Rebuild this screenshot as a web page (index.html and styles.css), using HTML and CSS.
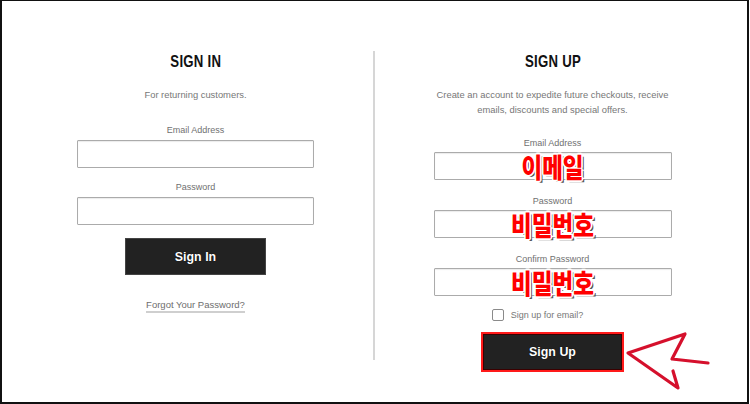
FILE: index.html
```html
<!DOCTYPE html>
<html lang="en">
<head>
<meta charset="utf-8">
<title>Sign in / Sign up</title>
<link rel="stylesheet" href="styles.css">
</head>
<body>
<div class="frame">
  <div class="panes">
    <section class="col">
      <h2 class="title"><span class="title-text">SIGN IN</span></h2>
      <p class="sub">For returning customers.</p>
      <label class="lbl lbl-first">Email Address</label>
      <div class="field"><input class="box" type="text"></div>
      <label class="lbl">Password</label>
      <div class="field"><input class="box" type="password"></div>
      <button class="btn btn-in">Sign In</button>
      <a class="forgot" href="#">Forgot Your Password?</a>
    </section>
    <div class="divider"></div>
    <section class="col col-up">
      <h2 class="title"><span class="title-text">SIGN UP</span></h2>
      <p class="sub">Create an account to expedite future checkouts, receive<br>emails, discounts and special offers.</p>
      <label class="lbl lbl-first">Email Address</label>
      <div class="field"><input class="box" type="text"><span class="mark">이메일</span></div>
      <label class="lbl">Password</label>
      <div class="field"><input class="box" type="password"><span class="mark">비밀번호</span></div>
      <label class="lbl">Confirm Password</label>
      <div class="field"><input class="box" type="password"><span class="mark">비밀번호</span></div>
      <div class="check-row"><span class="check"></span><span class="check-text">Sign up for email?</span></div>
      <button class="btn btn-up">Sign Up</button>
    </section>
  </div>
  <svg class="arrow" viewBox="0 0 750 404" width="750" height="404">
    <polyline points="673,371 678,388 628,353 685,334 672,359 708,363" fill="none" stroke="#d5102c" stroke-width="3.2" stroke-linecap="round" stroke-linejoin="round"/>
  </svg>
</div>
</body>
</html>
```

FILE: styles.css
```css
* { box-sizing: border-box; }
html, body { margin: 0; padding: 0; background: #fff; }
body { font-family: "Liberation Sans", Arial, sans-serif; }

.frame {
  position: relative;
  width: 749px;
  height: 404px;
  border: 2px solid #111;
  border-top-width: 1px;
  background: #fff;
  overflow: hidden;
}

.panes {
  display: grid;
  grid-template-columns: 355px 2px 355px;
  align-items: start;
  margin-top: 50px;
  padding-left: 16px;
}

.divider {
  width: 2px;
  height: 309px;
  background: #d6d6d6;
}

.col {
  display: flex;
  flex-direction: column;
  align-items: center;
}

.title {
  margin: 0;
  font-family: "Liberation Sans", Arial, sans-serif;
  font-weight: 700;
  font-size: 16.5px;
  line-height: 20px;
  color: #111;
}
.title-text {
  display: inline-block;
  transform: scaleX(0.8);
  letter-spacing: 0.3px;
}

.sub {
  margin: 16px 0 0;
  font-size: 9.4px;
  line-height: 15px;
  color: #777;
  text-align: center;
}

.lbl {
  display: block;
  margin-top: 13px;
  font-size: 9px;
  line-height: 12px;
  color: #707070;
}
.col .lbl-first { margin-top: 22px; }
.col-up .lbl { margin-top: 15px; }
.col-up .lbl-first { margin-top: 20px; }

.field {
  position: relative;
  margin-top: 4px;
  width: 237px;
  height: 28px;
}
.col-up .field { margin-top: 3px; width: 238px; }

.box {
  display: block;
  width: 100%;
  height: 100%;
  margin: 0;
  border: 1px solid #ababab;
  border-radius: 1px;
  box-shadow: inset 0 1px 1px rgba(0,0,0,0.08);
  background: #fff;
}

.mark {
  position: absolute;
  left: 0;
  right: 0;
  top: 3px;
  text-align: center;
  font-family: "Noto Sans CJK KR", sans-serif;
  font-weight: 900;
  font-size: 22.5px;
  line-height: 22px;
  color: #ff0000;
  transform: scaleY(1.2);
  transform-origin: 50% 50%;
  text-shadow:
    -1px -1px 0 #fff, 1px -1px 0 #fff, -1px 1px 0 #fff, 1px 1px 0 #fff,
    0 -1.5px 0 #fff, 0 1.5px 0 #fff, -1.5px 0 0 #fff, 1.5px 0 0 #fff,
    2.5px 2px 0 #555;
}

.btn {
  display: flex;
  align-items: center;
  justify-content: center;
  margin: 13px 0 0;
  padding: 0;
  width: 141px;
  height: 37px;
  background: #222;
  border: 1px solid #444;
  color: #fff;
  font-family: "Liberation Sans", Arial, sans-serif;
  font-weight: 700;
  font-size: 12.4px;
  text-shadow: 0 0 1px #000;
}

.btn-up {
  margin-top: 11px;
  width: 143px;
  height: 40px;
  border: 2px solid #ff1a1a;
  box-shadow: inset 0 0 0 1px #3a0000;
}

.forgot {
  margin-top: 24px;
  font-size: 9.5px;
  line-height: 12px;
  color: #6e6e6e;
  text-decoration: none;
  border-bottom: 2px solid #cfcfcf;
}

.check-row {
  display: flex;
  align-items: center;
  gap: 7px;
  margin-top: 13px;
  margin-right: 30px;
  height: 12px;
}
.check {
  width: 12px;
  height: 12px;
  border: 1.5px solid #8a8a8a;
  border-radius: 2px;
  background: #fff;
}
.check-text {
  font-size: 9px;
  line-height: 12px;
  color: #777;
}

.arrow {
  position: absolute;
  left: -2px;
  top: -1px;
  pointer-events: none;
}
```
